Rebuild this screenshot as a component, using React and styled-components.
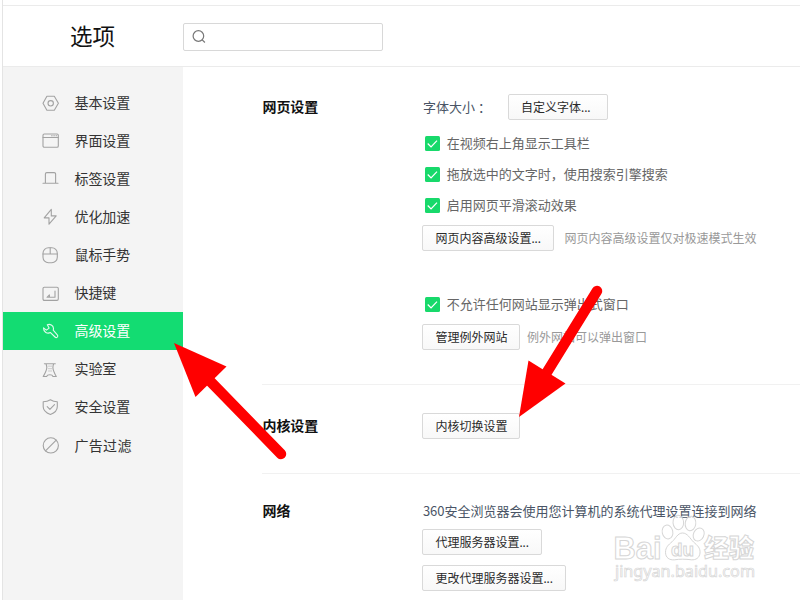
import React from "react";
import styled, { createGlobalStyle, css } from "styled-components";

const Global = createGlobalStyle`
  * { box-sizing: border-box; }
  body {
    margin: 0;
    background: #fff;
    overflow: hidden;
    font-family: "Noto Sans CJK SC", sans-serif;
  }
`;

const Page = styled.div`
  position: relative;
  width: 800px;
  height: 600px;
  padding-left: 2px;
  overflow: hidden;
`;
const Window = styled.div`
  display: flex;
  flex-direction: column;
  height: 600px;
  border-left: 1px solid #e4e4e4;
`;
const TopStrip = styled.div`
  flex: none;
  height: 6px;
  border-bottom: 1px solid #ebebeb;
`;
const Header = styled.header`
  flex: none;
  display: flex;
  align-items: center;
  height: 61px;
  border-bottom: 1px solid #ebebeb;
`;
const Title = styled.h1`
  width: 180px;
  margin: 0;
  padding: 0 0 2px 67px;
  font-size: 22.5px;
  line-height: 30px;
  font-weight: 400;
  color: #111;
`;
const SearchBox = styled.div`
  display: flex;
  align-items: center;
  width: 200px;
  height: 28px;
  margin-top: 1px;
  padding-left: 8px;
  border: 1px solid #d8d8d8;
  border-radius: 2px;
`;
const Body = styled.div`
  flex: 1;
  display: flex;
  min-height: 0;
`;
const Sidebar = styled.nav`
  flex: none;
  width: 180px;
  padding-top: 17px;
  background: #f4f4f4;
`;
const NavItem = styled.div`
  display: flex;
  align-items: center;
  gap: 14.5px;
  height: 38px;
  padding-left: 39px;
  font-size: 14px;
  line-height: 20px;
  color: #333;
  ${(p) =>
    p.$active &&
    css`
      background: #13dc72;
      color: #fff;
    `}
`;
const NavIcon = styled.svg`
  flex: none;
  width: 18px;
  height: 18px;
  fill: none;
  stroke: ${(p) => (p.$active ? "#e2fbee" : "#a2a2a2")};
  stroke-width: 1.1;
  stroke-linejoin: round;
  stroke-linecap: round;
`;
const NavLabel = styled.span`
  padding-bottom: ${(p) => (p.$wide ? 0 : 2)}px;
  letter-spacing: ${(p) => (p.$wide ? "0.3px" : "-0.1px")};
`;
const Content = styled.main`
  flex: 1;
  padding-left: 79px;
`;
const Section = styled.section`
  display: flex;
  height: ${(p) => p.$height}px;
  padding-top: ${(p) => p.$top}px;
  border-bottom: 1px solid #f1f1f1;
`;
const SectionTitle = styled.h2`
  flex: none;
  width: 160.4px;
  margin: 0;
  padding-left: 0.5px;
  font-size: 14px;
  font-weight: 700;
  line-height: 25px;
  letter-spacing: -0.1px;
  color: #111;
`;
const Fields = styled.div`
  flex: 1;
  white-space: nowrap;
`;
const Row = styled.div`
  display: flex;
  align-items: center;
  height: 26px;
  margin-top: ${(p) => p.$gap || 0}px;
`;
const Text = styled.span`
  padding-left: 0.5px;
  font-size: 13px;
  line-height: 20px;
  color: #4a5566;
`;
const Colon = styled(Text)`
  width: 33px;
  padding-left: 3px;
`;
const Button = styled.button`
  width: ${(p) => p.$width}px;
  height: 26px;
  padding: 0 0 0 12px;
  border: 1px solid #d9d9d9;
  border-radius: 2px;
  background: linear-gradient(#fff, #f8f8f8);
  font: 12px/18px "Noto Sans CJK SC", sans-serif;
  color: #2b2b2b;
  text-align: left;
  white-space: nowrap;
`;
const Dots = styled.span`
  font-family: "Noto Sans", sans-serif;
`;
const Hint = styled.span`
  margin-left: ${(p) => p.$left}px;
  font-size: 12px;
  line-height: 18px;
  color: #999;
`;
const CheckList = styled.div`
  margin-top: ${(p) => p.$gap}px;
`;
const CheckLabel = styled.label`
  display: flex;
  align-items: center;
  gap: 6.7px;
  height: 31px;
  padding-left: 3px;
  font-size: 13px;
  line-height: 20px;
  color: #666;
`;
const CheckText = styled.span`
  padding-bottom: 2px;
`;
const CheckMark = styled.svg`
  flex: none;
  width: 14.6px;
  height: 15px;
  border-radius: 1.5px;
  background: #18d96b;
`;
const Overlay = styled.svg`
  position: absolute;
  inset: 0;
  width: 800px;
  height: 600px;
  pointer-events: none;
`;

const drawings = {
  basic: (
    <>
      <path d="M4.9 2.3h7.4l4.1 7-4.1 7H4.9L1 9.3z" />
      <circle cx="8.7" cy="9.3" r="2.7" />
    </>
  ),
  window: (
    <>
      <rect x="1" y="2" width="15.3" height="13.3" rx="1.3" />
      <path d="M1 5.5h15.3M9.6 3.8h.6M11.8 3.8h.6M14 3.8h.6" />
    </>
  ),
  tab: <path d="M1 13.3h15M3.4 13V4a1.4 1.4 0 0 1 1.4-1.4h7.4A1.4 1.4 0 0 1 13.6 4v9" />,
  bolt: <path d="M9.3 1.4L2.2 9.9H7v6.3l7.2-8.3H9.3z" />,
  mouse: (
    <>
      <rect x="1" y="1.8" width="14.3" height="15" rx="5.5" />
      <path d="M1 8h14.3M8.2 1.8V8" />
    </>
  ),
  key: (
    <>
      <rect x="1" y="3.2" width="15.3" height="13.2" rx="1.3" />
      <path d="M13 7v6.3H5l2.4-2.4v2.2" />
    </>
  ),
  wrench: (
    <path d="M5.3 2.8C8 1.7 11.3 3.3 11.5 6.5c0 .7-.1 1.2-.3 1.7l4.1 4.6c.7.8.6 1.7 0 2.3-.7.6-1.6.6-2.3-.1l-4.5-4.4c-3.2 1.5-7-.4-7-4.7l2.9 2.2 2.700-2z" />
  ),
  lab: (
    <>
      <path d="M2.4 3.7h10.9M4 3.700c.5 1.300.8 2.500.8 3.800 0 3-1.300 5-3.600 9h3.400c.4-1.200 1.500-1.700 3.200-1.700s2.800.5 3.200 1.700h3.300c-2.300-4-3.400-6-3.400-9 0-1.300.2-2.500.8-3.800" />
      <path d="M7 6v6M9 6v6" strokeWidth="0.8" strokeDasharray="0.4 2" />
    </>
  ),
  shield: (
    <>
      <path d="M8.4 1.7c2.2 1.4 4.5 2 6.9 2.1v5c0 3.7-2.9 6.2-6.9 7.7-4-1.5-7.2-4-7.2-7.7v-5c2.5-.1 5-.7 7.2-2.1z" />
      <path d="M5.2 8.7l2.7 2.7 4.6-4.7" />
    </>
  ),
  ban: (
    <>
      <circle cx="8.8" cy="9.4" r="7.6" />
      <path d="M3.5 14.8L14.2 4.1" />
    </>
  ),
};

const navItems = [
  ["基本设置", "basic"],
  ["界面设置", "window"],
  ["标签设置", "tab"],
  ["优化加速", "bolt"],
  ["鼠标手势", "mouse"],
  ["快捷键", "key"],
  ["高级设置", "wrench"],
  ["实验室", "lab"],
  ["安全设置", "shield"],
  ["广告过滤", "ban"],
];

function Check({ children }) {
  return (
    <CheckLabel>
      <CheckMark viewBox="0 0 14 14">
        <path d="M2.6 7l3.2 3.2 5.7-6" fill="none" stroke="#fff" strokeWidth="1.2" />
      </CheckMark>
      <CheckText>{children}</CheckText>
    </CheckLabel>
  );
}

function Watermark() {
  return (
    <g fill="#fff" fillOpacity="0.7" stroke="#d6d6d6" strokeWidth="1">
      <text x="613.5" y="559" fontSize="31" fontWeight="700" fontFamily="Liberation Sans, sans-serif" textLength="48" lengthAdjust="spacingAndGlyphs">Bai</text>
      <ellipse cx="667.5" cy="532" rx="5.3" ry="7" transform="rotate(-12 667.5 532)" />
      <ellipse cx="678.3" cy="522.5" rx="5.3" ry="7.2" transform="rotate(-4 678.3 522.5)" />
      <ellipse cx="690.5" cy="523.5" rx="5.3" ry="7.2" transform="rotate(8 690.5 523.5)" />
      <ellipse cx="698.7" cy="534.5" rx="5.2" ry="6.8" transform="rotate(25 698.7 534.5)" />
      <path d="M682.5 533c5 0 7.5 5.500 11 9 4 3.500 7 6 6.500 11-.6 5-4 7-8.500 6.800-6-.8-12-.8-17 0-5 .5-9-2-9-7.500 0-5 3-7.500 6.500-10.500 3.500-3 5.500-8.800 10.500-8.800z" />
      <text x="671" y="556" fontSize="19" fontWeight="700" fontFamily="Liberation Sans, sans-serif" textLength="23" lengthAdjust="spacingAndGlyphs">du</text>
      <text x="704" y="556.5" fontSize="25" fontWeight="900" textLength="50">经验</text>
      <text x="615" y="577" fontSize="16" strokeWidth="0.7" fontFamily="Noto Sans, sans-serif" textLength="140" lengthAdjust="spacingAndGlyphs">jingyan.baidu.com</text>
    </g>
  );
}

export default function App() {
  return (
    <Page>
      <Global />
      <Window>
        <TopStrip />
        <Header>
          <Title>选项</Title>
          <SearchBox>
            <svg width="15" height="15" viewBox="0 0 15 15" fill="none" stroke="#777" strokeWidth="1.2">
              <circle cx="6.4" cy="7" r="5.3" />
              <path d="M10.2 10.800l2.700 2.700" />
            </svg>
          </SearchBox>
        </Header>
        <Body>
          <Sidebar>
            {navItems.map(([label, icon]) => {
              const active = icon === "wrench";
              return (
                <NavItem key={icon} $active={active}>
                  <NavIcon viewBox="0 0 18 18" $active={active}>{drawings[icon]}</NavIcon>
                  <NavLabel $wide={icon === "ban"}>{label}</NavLabel>
                </NavItem>
              );
            })}
          </Sidebar>
          <Content>
            <Section $height={318} $top={27}>
              <SectionTitle>网页设置</SectionTitle>
              <Fields>
                <Row>
                  <Text>字体大小</Text>
                  <Colon>：</Colon>
                  <Button $width={100}>自定义字体<Dots>...</Dots></Button>
                </Row>
                <CheckList $gap={8}>
                  <Check>在视频右上角显示工具栏</Check>
                  <Check>拖放选中的文字时，使用搜索引擎搜索</Check>
                  <Check>启用网页平滑滚动效果</Check>
                </CheckList>
                <Row $gap={4}>
                  <Button $width={132}>网页内容高级设置<Dots>...</Dots></Button>
                  <Hint $left={10}>网页内容高级设置仅对极速模式生效</Hint>
                </Row>
                <CheckList $gap={38}>
                  <Check>不允许任何网站显示弹出式窗口</Check>
                </CheckList>
                <Row $gap={4}>
                  <Button $width={98}>管理例外网站</Button>
                  <Hint $left={6.5}>例外网站可以弹出窗口</Hint>
                </Row>
              </Fields>
            </Section>
            <Section $height={89} $top={28}>
              <SectionTitle>内核设置</SectionTitle>
              <Fields>
                <Row><Button $width={98}>内核切换设置</Button></Row>
              </Fields>
            </Section>
            <Section $height={140} $top={24}>
              <SectionTitle>网络</SectionTitle>
              <Fields>
                <Row><Text>360安全浏览器会使用您计算机的系统代理设置连接到网络</Text></Row>
                <Row $gap={5}><Button $width={120}>代理服务器设置<Dots>...</Dots></Button></Row>
                <Row $gap={10}><Button $width={144}>更改代理服务器设置<Dots>...</Dots></Button></Row>
              </Fields>
            </Section>
          </Content>
        </Body>
      </Window>
      <Overlay viewBox="0 0 800 600">
        <Watermark />
        <g fill="#f00" stroke="none">
          <path d="M174 343L226.5 366.5 195.5 397z" />
          <path d="M519 417L528.5 360.5 565.5 383.5z" />
        </g>
        <g stroke="#f00" strokeWidth="10.5" strokeLinecap="round">
          <path d="M207 378L281 454" />
          <path d="M544 377L597 291" />
        </g>
      </Overlay>
    </Page>
  );
}
